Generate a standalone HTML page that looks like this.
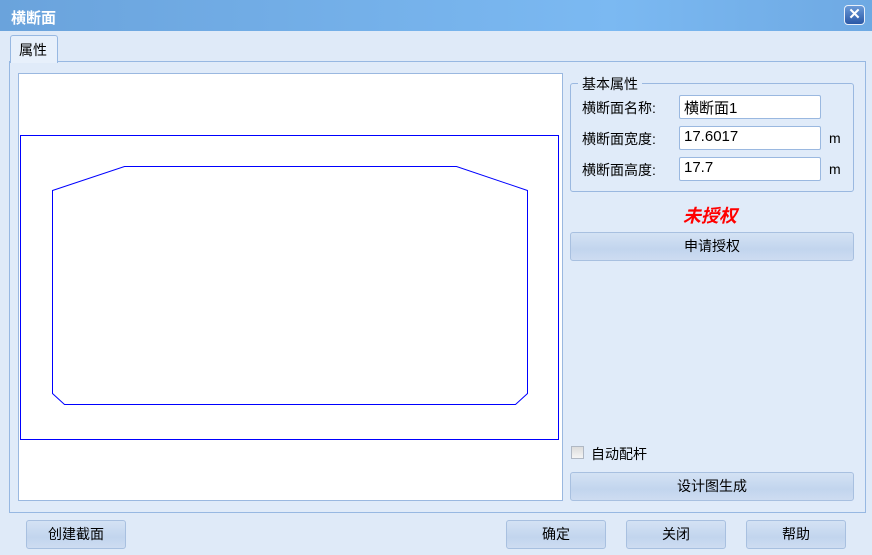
<!DOCTYPE html>
<html><head><meta charset="utf-8"><style>
*{margin:0;padding:0;box-sizing:border-box}
body{width:872px;height:555px;background:#dfeaf8;font-family:"Liberation Sans","Noto Sans CJK SC",sans-serif;font-size:14px;color:#000;position:relative;overflow:hidden}
.a{position:absolute}
.title{left:0;top:0;width:872px;height:31px;background:linear-gradient(90deg,#6aa3dc,#7bb9f2 70%,#6ea9e3);color:#fff;font-weight:bold;font-size:15px;padding:7px 0 0 11px}
.close{left:844px;top:5px;width:21px;height:20px;background:linear-gradient(#6a9ad8,#2a58a6);border-radius:4px;border:1px solid #e8f0fa;color:#fff;font-weight:bold;font-size:15px;text-align:center;line-height:18px}
.tab{left:10px;top:35px;width:48px;height:28px;background:#e7f0fb;border:1px solid #97b8e2;border-bottom:none;border-radius:3px 3px 0 0;padding:4px 0 0 8px;z-index:2}
.panel{left:9px;top:61px;width:857px;height:452px;border:1px solid #97b8e2;background:#e0ebf9}
.canvas{left:18px;top:73px;width:545px;height:428px;background:#fff;border:1px solid #9ab8e0}
.grp{left:570px;top:83px;width:284px;height:109px;border:1px solid #9ab8e0;border-radius:3px}
.lg{left:578px;top:74px;background:#e0ebf9;padding:0 4px}
.in{height:24px;border:1px solid #9ab8e0;background:#fff;border-radius:2px;padding:1px 0 0 4px;font-size:15px}
.btn{height:29px;border:1px solid #a8c0e0;border-radius:3px;background:linear-gradient(#d4e2f4,#c2d5ee 60%,#cddcf1);text-align:center;line-height:27px}
</style></head><body>
<div class="a title">横断面</div>
<div class="a close">✕</div>
<div class="a panel"></div>
<div class="a tab">属性</div>
<div class="a canvas"></div>
<svg class="a" style="left:0;top:0" width="872" height="555"><rect x="20.5" y="135.5" width="538" height="304" fill="none" stroke="#0000ff"/><polygon points="52.5,190.5 124.5,166.5 456.5,166.5 527.5,190.5 527.5,393.5 515.5,404.5 64.5,404.5 52.5,393.5" fill="none" stroke="#0000ff"/></svg>
<div class="a grp"></div>
<div class="a lg">基本属性</div>
<div class="a" style="left:582px;top:98px">横断面名称:</div>
<div class="a" style="left:582px;top:129px">横断面宽度:</div>
<div class="a" style="left:582px;top:160px">横断面高度:</div>
<div class="a in" style="left:679px;top:95px;width:142px">横断面1</div>
<div class="a in" style="left:679px;top:126px;width:142px">17.6017</div>
<div class="a in" style="left:679px;top:157px;width:142px">17.7</div>
<div class="a" style="left:829px;top:130px">m</div>
<div class="a" style="left:829px;top:161px">m</div>
<div class="a" style="left:683px;top:202px;color:#f00;font-weight:bold;font-style:italic;font-size:18px">未授权</div>
<div class="a btn" style="left:570px;top:232px;width:284px">申请授权</div>
<div class="a" style="left:571px;top:446px;width:13px;height:13px;border:1px solid #b0b8c4;background:linear-gradient(#ddd,#f4f4f4)"></div>
<div class="a" style="left:591px;top:444px">自动配杆</div>
<div class="a btn" style="left:570px;top:472px;width:284px">设计图生成</div>
<div class="a btn" style="left:26px;top:520px;width:100px">创建截面</div>
<div class="a btn" style="left:506px;top:520px;width:100px">确定</div>
<div class="a btn" style="left:626px;top:520px;width:100px">关闭</div>
<div class="a btn" style="left:746px;top:520px;width:100px">帮助</div>
</body></html>
